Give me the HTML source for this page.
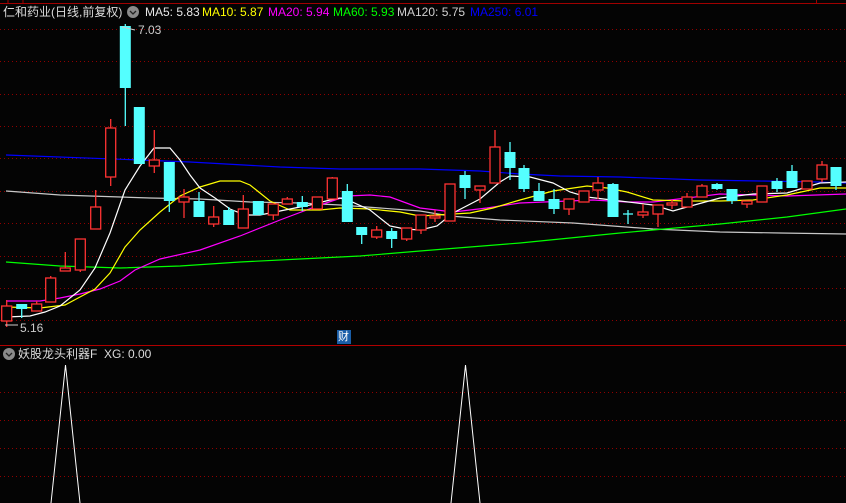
<!DOCTYPE html>
<html><head><meta charset="utf-8"><style>
html,body{margin:0;padding:0;background:#040404;width:846px;height:503px;overflow:hidden}
.t{position:absolute;font-family:"Liberation Sans","Noto Sans CJK SC",sans-serif;font-size:12px;line-height:14px;white-space:nowrap}
</style></head><body>
<svg width="846" height="503" style="position:absolute;left:0;top:0" xmlns="http://www.w3.org/2000/svg">
<g stroke="#a00000" stroke-width="1" fill="none">
<line x1="0" y1="3.5" x2="846" y2="3.5"/>
<line x1="8" y1="0" x2="8" y2="3"/><line x1="23" y1="0" x2="23" y2="3"/><line x1="816.5" y1="0" x2="816.5" y2="3"/>
<line x1="0" y1="345.5" x2="846" y2="345.5" stroke="#b00000"/>
</g>
<g stroke="#900000" stroke-width="1" stroke-dasharray="1 3">
<line x1="0" y1="29.5" x2="846" y2="29.5"/><line x1="0" y1="61.5" x2="846" y2="61.5"/><line x1="0" y1="94.5" x2="846" y2="94.5"/>
<line x1="0" y1="126.5" x2="846" y2="126.5"/><line x1="0" y1="158.5" x2="846" y2="158.5"/><line x1="0" y1="191.5" x2="846" y2="191.5"/>
<line x1="0" y1="223.5" x2="846" y2="223.5"/><line x1="0" y1="256.5" x2="846" y2="256.5"/><line x1="0" y1="288.5" x2="846" y2="288.5"/>
<line x1="0" y1="320.5" x2="846" y2="320.5"/>
<line x1="0" y1="392.5" x2="846" y2="392.5"/><line x1="0" y1="420.5" x2="846" y2="420.5"/><line x1="0" y1="448.5" x2="846" y2="448.5"/><line x1="0" y1="476.5" x2="846" y2="476.5"/>
</g>
<g fill="none" stroke-width="1.2">
<polyline stroke="#0000ff" points="6,155 140,160 190,162 280,167 340,169 420,169 480,171 520,174 560,176 620,177 700,180 760,181 820,182 846,183"/>
<polyline stroke="#c8c8c8" points="6,191 60,195 90,196 150,198 200,199 250,202 300,203 340,205 380,208 420,211 450,216 500,220 573,223 653,229 720,232 780,233 846,234"/>
<polyline stroke="#00ff00" points="6,262 60,266 120,268 180,266 240,262 300,259 360,256 420,251 520,243 620,233 720,224 787,217 846,209"/>
<polyline stroke="#ff00ff" points="6,301 40,301 60,298 80,294 100,289 120,281 135,270 160,259 200,250 240,236 280,220 320,205 347,196 370,195 390,197 420,208 453,212 487,208 520,203 593,200 627,202 653,202 687,198 720,194 787,196 846,194"/>
<polyline stroke="#ffff00" points="6,307 40,308 65,305 80,297 95,289 110,273 125,247 140,230 160,212 180,196 200,187 220,181 240,181 250,185 270,201 290,210 320,210 340,208 370,209 400,212 420,216 470,213 493,208 520,200 553,191 587,186 607,188 627,192 653,200 687,201 720,201 753,200 787,195 820,188 846,188"/>
<polyline stroke="#ffffff" points="6,317 30,316 45,312 60,306 80,290 95,268 110,233 125,190 140,166 154,148 170,148 180,160 190,175 200,188 215,198 230,209 245,215 260,215 275,212 290,209 310,205 330,200 340,198 350,201 370,210 390,226 405,229 420,230 437,226 453,213 480,199 500,182 510,176 530,177 553,183 570,192 587,197 620,201 653,205 673,211 687,207 720,198 753,194 787,193 820,183 846,182"/>
</g>
<g id="c" stroke-width="1.3"></g>
<g stroke="#fff" stroke-width="1" fill="none">
<polyline points="51,503 65.5,365 80,503"/>
<polyline points="451,503 465.5,365 480,503"/>
</g>
<rect x="337" y="330" width="14" height="14" fill="#1a5ea8"/>
<line x1="5" y1="325" x2="18" y2="325" stroke="#ccc"/>
<line x1="122" y1="27" x2="135" y2="30" stroke="#ccc"/>
<circle cx="133" cy="12" r="6" fill="#8a8a8a"/>
<polyline points="130,11 133,14 136,11" fill="none" stroke="#222" stroke-width="1.3"/>
<circle cx="9" cy="354" r="6" fill="#8a8a8a"/>
<polyline points="6,353 9,356 12,353" fill="none" stroke="#222" stroke-width="1.3"/>
</svg>
<div class="t" style="left:3px;top:5px;color:#dcdcdc">仁和药业(日线,前复权)</div>
<div class="t" style="left:145px;top:5px;color:#e8e8e8">MA5: 5.83</div>
<div class="t" style="left:202px;top:5px;color:#ffff00">MA10: 5.87</div>
<div class="t" style="left:268px;top:5px;color:#ff00ff">MA20: 5.94</div>
<div class="t" style="left:333px;top:5px;color:#00ff00">MA60: 5.93</div>
<div class="t" style="left:397px;top:5px;color:#d0d0d0">MA120: 5.75</div>
<div class="t" style="left:470px;top:5px;color:#0000ff">MA250: 6.01</div>
<div class="t" style="left:138px;top:23px;color:#ccc">7.03</div>
<div class="t" style="left:20px;top:321px;color:#ccc">5.16</div>
<div class="t" style="left:338px;top:330px;color:#fff;font-size:11px">财</div>
<div class="t" style="left:18px;top:347px;color:#dcdcdc">妖股龙头利器F&nbsp; XG: 0.00</div>
<script>
var d=[
[6.7,'r',306,321,300,327],[21.7,'c',304,309,304,318],[36.7,'r',304,311,301,311],[50.7,'r',278,302,276,302],
[65.3,'r',268,271,252,271],[80.3,'r',239,270,239,272],[95.7,'r',207,229,190,229],[110.7,'r',128,177,119,186],
[125.3,'c',26,88,24,126],[139.3,'c',107,164,107,164],[154.3,'r',160,166,130,173],[169.3,'c',162,201,162,212],
[184,'r',197,202,189,218],[199,'c',201,217,192,217],[213.7,'r',217,224,206,227],[228.7,'c',210,225,207,225],
[243.3,'r',209,228,195,228],[258.3,'c',201,215,201,215],[273.3,'r',204,215,204,220],[287.3,'r',199,204,197,204],
[302.3,'c',202,207,196,211],[317.3,'r',197,209,197,209],[332.3,'r',178,199,177,199],[347.3,'c',191,222,184,222],
[361.7,'c',227,235,227,244],[376.7,'r',230,237,226,239],[391.7,'c',231,239,228,248],[406.7,'r',228,239,228,241],
[421,'r',215,230,215,234],[435,'r',216,218,210,222],[450,'r',184,221,184,221],[465,'c',175,188,171,199],
[480,'r',186,190,186,203],[495,'r',147,183,130,183],[510,'c',152,168,142,180],[524,'c',168,189,165,192],
[539,'c',191,201,183,201],[554,'c',199,209,189,214],[569,'r',199,209,199,215],[584,'r',191,202,191,202],
[598,'r',183,190,177,199],[613,'c',184,217,183,217],[628,'x',214,214,210,224],[643,'r',212,215,204,218],
[658,'r',205,214,205,227],[672,'r',203,205,200,209],[687,'r',197,207,193,207],[702,'r',186,197,184,197],
[717,'c',184,189,183,190],[732,'c',189,201,189,204],[747,'r',201,204,201,208],[762,'r',186,202,186,202],
[777,'c',181,189,178,192],[792,'c',171,188,165,188],[807,'r',181,189,181,189],[822,'r',165,179,161,182],[836,'c',167,186,167,190]];
var s='';
d.forEach(function(k){var x=k[0],col=k[1]=='r'?'#ff3333':'#54ffff';
s+='<line x1="'+x+'" y1="'+k[4]+'" x2="'+x+'" y2="'+k[5]+'" stroke="'+col+'"/>';
if(k[1]=='x'){s+='<line x1="'+(x-5)+'" y1="'+k[2]+'" x2="'+(x+5)+'" y2="'+k[2]+'" stroke="'+col+'"/>';return;}
var h=Math.max(k[3]-k[2],1);
if(k[1]=='r')s+='<rect x="'+(x-5)+'" y="'+k[2]+'" width="10" height="'+h+'" fill="#040404" stroke="'+col+'"/>';
else s+='<rect x="'+(x-5.5)+'" y="'+k[2]+'" width="11" height="'+h+'" fill="'+col+'"/>';});
document.getElementById('c').innerHTML=s;
</script>
</body></html>
